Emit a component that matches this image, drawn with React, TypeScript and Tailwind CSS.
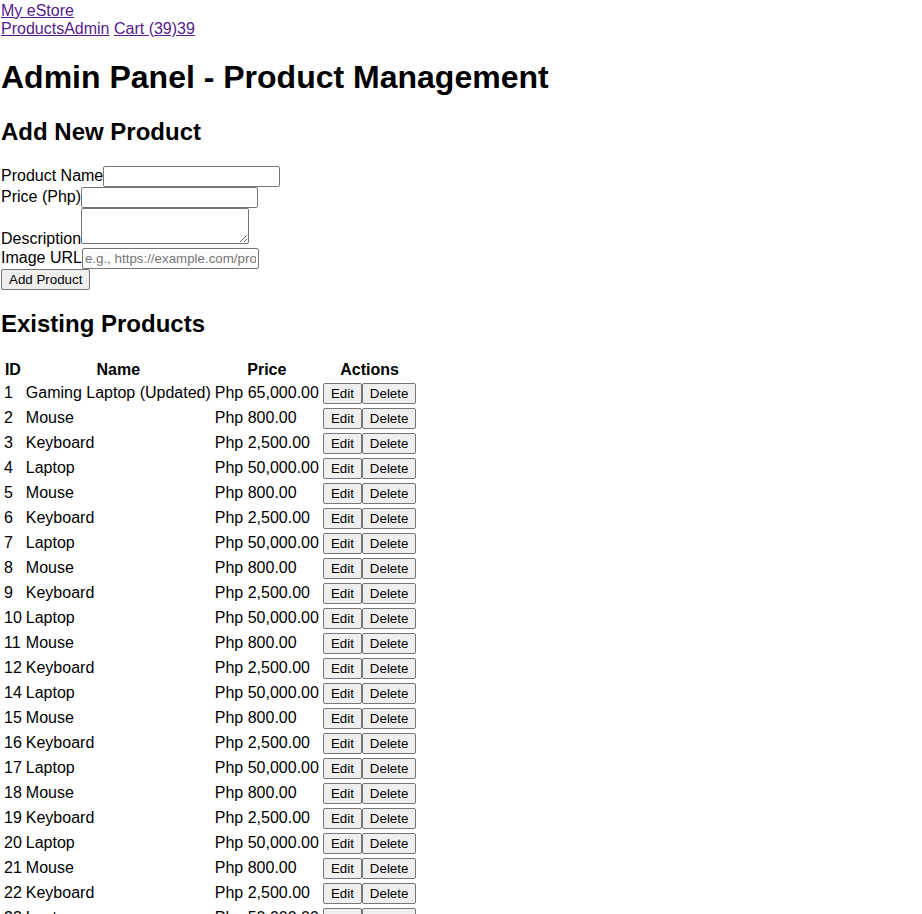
import React from 'react';

type Product = { id: number; name: string; price: string };

const products: Product[] = [
  { id: 1, name: 'Gaming Laptop (Updated)', price: 'Php 65,000.00' },
  { id: 2, name: 'Mouse', price: 'Php 800.00' },
  { id: 3, name: 'Keyboard', price: 'Php 2,500.00' },
  { id: 4, name: 'Laptop', price: 'Php 50,000.00' },
  { id: 5, name: 'Mouse', price: 'Php 800.00' },
  { id: 6, name: 'Keyboard', price: 'Php 2,500.00' },
  { id: 7, name: 'Laptop', price: 'Php 50,000.00' },
  { id: 8, name: 'Mouse', price: 'Php 800.00' },
  { id: 9, name: 'Keyboard', price: 'Php 2,500.00' },
  { id: 10, name: 'Laptop', price: 'Php 50,000.00' },
  { id: 11, name: 'Mouse', price: 'Php 800.00' },
  { id: 12, name: 'Keyboard', price: 'Php 2,500.00' },
  { id: 14, name: 'Laptop', price: 'Php 50,000.00' },
  { id: 15, name: 'Mouse', price: 'Php 800.00' },
  { id: 16, name: 'Keyboard', price: 'Php 2,500.00' },
  { id: 17, name: 'Laptop', price: 'Php 50,000.00' },
  { id: 18, name: 'Mouse', price: 'Php 800.00' },
  { id: 19, name: 'Keyboard', price: 'Php 2,500.00' },
  { id: 20, name: 'Laptop', price: 'Php 50,000.00' },
  { id: 21, name: 'Mouse', price: 'Php 800.00' },
  { id: 22, name: 'Keyboard', price: 'Php 2,500.00' },
  { id: 23, name: 'Laptop', price: 'Php 50,000.00' },
  { id: 24, name: 'Mouse', price: 'Php 800.00' },
  { id: 25, name: 'Keyboard', price: 'Php 2,500.00' },
];

const linkCls = 'text-[#551a8b] underline';
const inputCls =
  'w-[177px] h-[21px] border border-[#767676] rounded-[2px] px-[2px] py-[1px] text-[13.33px] bg-white align-baseline placeholder:text-[#757575]';
const btnCls =
  'h-[21px] bg-[#efefef] border border-[#767676] rounded-[2px] px-[7px] py-[1px] text-[13.33px] text-black leading-[normal] align-baseline';

export default function App() {
  return (
    <div className="font-['Liberation_Sans',Arial,sans-serif] text-[16px] leading-[normal] text-black bg-white min-h-screen pt-[2px] pl-[1px]">
      {/* Header / nav */}
      <div>
        <a href="#" className={linkCls}>My eStore</a>
      </div>
      <nav>
        <a href="#" className={linkCls}>Products</a>
        <a href="#" className={linkCls}>Admin</a>{' '}
        <a href="#" className={linkCls}>
          Cart (39)<span>39</span>
        </a>
      </nav>

      <h1 className="text-[32px] font-bold my-[21.44px]">Admin Panel - Product Management</h1>

      <h2 className="text-[24px] font-bold my-[19.92px]">Add New Product</h2>
      <form onSubmit={(e) => e.preventDefault()}>
        <div>
          <label>Product Name</label>
          <input type="text" className={inputCls} />
        </div>
        <div>
          <label>Price (Php)</label>
          <input type="text" className={inputCls} />
        </div>
        <div>
          <label>Description</label>
          <textarea className="w-[168px] h-[36px] border border-[#767676] rounded-[2px] px-[2px] py-[1px] font-mono text-[13.33px] bg-white align-baseline resize" />
        </div>
        <div>
          <label>Image URL</label>
          <input type="text" placeholder="e.g., https://example.com/product.jpg" className={inputCls} />
        </div>
        <button type="submit" className={btnCls}>Add Product</button>
      </form>

      <h2 className="text-[24px] font-bold my-[19.92px]">Existing Products</h2>
      <table className="border-separate border-spacing-[2px]">
        <thead>
          <tr>
            <th className="p-[1px] text-center font-bold">ID</th>
            <th className="p-[1px] text-center font-bold">Name</th>
            <th className="p-[1px] text-center font-bold">Price</th>
            <th className="p-[1px] text-center font-bold">Actions</th>
          </tr>
        </thead>
        <tbody>
          {products.map((p) => (
            <tr key={p.id}>
              <td className="p-[1px]">{p.id}</td>
              <td className="p-[1px]">{p.name}</td>
              <td className="p-[1px]">{p.price}</td>
              <td className="p-[1px] whitespace-nowrap">
                <button className={btnCls}>Edit</button>
                <button className={btnCls}>Delete</button>
              </td>
            </tr>
          ))}
        </tbody>
      </table>
    </div>
  );
}
